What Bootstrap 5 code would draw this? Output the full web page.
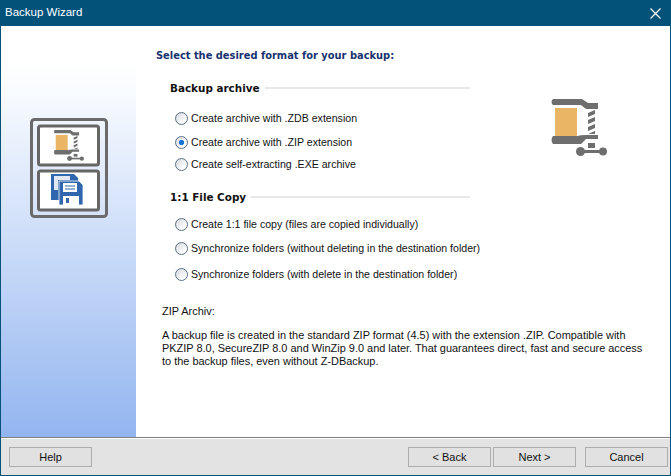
<!DOCTYPE html>
<html><head><meta charset="utf-8"><title>Backup Wizard</title>
<link href="https://cdn.jsdelivr.net/npm/bootstrap@5.3.0/dist/css/bootstrap.min.css" rel="stylesheet">
<style>
html,body{height:100%;margin:0;overflow:hidden}
body{font-family:"Liberation Sans",Arial,sans-serif;font-size:10.95px;color:#111;background:#fff}
.wiz{width:671px;height:476px;border:1px solid #02527a;border-top:0;display:flex;flex-direction:column}
.wiz-title{height:26px;background:#02527a;color:#fff;font-size:11.5px;margin:0 -1px;padding:0 0 0 5px}
.wiz-x{margin-right:10px}
.wiz-main{flex:1;min-height:0}
.wiz-side{width:135px;flex:none;padding:92px 0 0 29px;background:linear-gradient(#fff 0,#fff 38px,#f4f8fe 80px,#93b5f0 100%)}
.wiz-body{flex:1;padding:21px 0 0 20px;min-width:0}
.wiz-head{font-family:"DejaVu Sans",sans-serif;font-weight:700;font-size:9.9px;line-height:18px;color:#17336f}
.wiz-left{width:314px;padding:16px 0 0 14px;flex:none}
.grp{font-weight:700;font-family:"DejaVu Sans",sans-serif;font-size:10.4px;line-height:14px;color:#111;gap:5px}
.grp::after{content:"";flex:1;border-top:2px solid #e8e8e8}
.opt{margin:0 0 0 5px;padding:0;display:flex;align-items:center;gap:3px;height:13px;min-height:0;line-height:13px;white-space:nowrap;font-size:10.6px}
.opt .form-check-input{width:13px;height:13px;margin:0;flex:none;float:none;background-color:#fff;background-image:linear-gradient(135deg,#d4d8dc,#fdfdfd 75%);border:1px solid #5b7186}
.opt .form-check-input:checked{background-color:#fff;background-image:radial-gradient(circle,#1573d6 0,#1573d6 2.2px,transparent 3px),linear-gradient(135deg,#d4d8dc,#fdfdfd 75%);border-color:#5b7186}
.opt-a{margin-top:17px}.opt-b{margin-top:11px}.opt-c{margin-top:9px}.opt-d{margin-top:14px}.opt-e{margin-top:13px}
.grp-b{margin-top:19px}
.wiz-icon{margin:34px 0 0 80px;flex:none}
.desc{margin:24px 0 0 6px;width:490px;line-height:13px}
.desc p{margin:0}
.desc p+p{margin-top:11px}
.wiz-foot{height:38px;background:#e3e3e3;border-top:1px solid #808080;box-shadow:inset 0 1px 0 #fff;padding:9px 2px 0 8px}
.wiz-btn{width:83px;height:20px;padding:0;background:#e1e1e1;border:1px solid #adadad;border-radius:0;font-size:11px;line-height:18px;color:#111}
.gap-two{gap:2px}.gap-nine{gap:9px}
</style></head><body>
<svg width="0" height="0" class="position-absolute"><defs>
<symbol id="clamp" viewBox="0 0 57 57">
<rect x="5" y="9" width="22" height="28" fill="#ebb566"/>
<path d="M3 0H32L38 4H48V10H36L31 6H3Q0 3 3 0Z" fill="#6e6e6e"/>
<path d="M3 45H31L36 40H48V36H36Q30 36 28 37H3Q0 41 3 45Z" fill="#6e6e6e"/>
<path d="M38 11h7v24h-7z" fill="#fff"/>
<path d="M38 14l7-3v4l-7 3zM38 21l7-3v4l-7 3zM38 28l7-3v4l-7 3zM38 35l7-3v3z" fill="#6e6e6e"/>
<rect x="38" y="44" width="7" height="5" fill="#6e6e6e"/>
<rect x="28" y="51" width="27" height="3" fill="#6e6e6e"/>
<circle cx="30.500" cy="52.500" r="4.500" fill="#6e6e6e"/><circle cx="53" cy="52.500" r="4" fill="#6e6e6e"/>
</symbol>
</defs></svg>
<div class="wiz">
<div class="wiz-title d-flex align-items-center justify-content-between"><span>Backup Wizard</span>
<svg width="11" height="11" viewBox="0 0 11 11" class="wiz-x"><path d="M.5.500l10 10M10.500.500l-10 10" stroke="#fff" stroke-width="1.200"/></svg></div>
<div class="wiz-main d-flex">
<div class="wiz-side">
<svg width="80" height="103" viewBox="0 0 80 103">
<rect x="1.500" y="1.500" width="75" height="97" rx="3" fill="none" stroke="#6b6b6b" stroke-width="3"/>
<rect x="8.500" y="8" width="60" height="39" rx="2" fill="#fff" stroke="#666" stroke-width="3"/>
<rect x="8.500" y="53" width="60" height="39" rx="2" fill="#fff" stroke="#666" stroke-width="3"/>
<use href="#clamp" x="23" y="12" width="31" height="31"/>
<path d="M21 56h23l4 4v22H21z" fill="#2f66ad"/><path d="M24 58h16v4H24zM24 62h4v10h-4z" fill="#dfe8f4"/>
<path d="M29 63h20l4 4v20H29z" fill="#2f66ad" stroke="#fff" stroke-width=".8"/>
<path d="M33 65h14v9H33z" fill="#fff"/><path d="M35 68h10M35 71h10" stroke="#2f66ad"/>
<path d="M33 78h16v9H33z" fill="#fff"/><path d="M36 80h3v5h-3z" fill="#2f66ad"/>
</svg>
</div>
<div class="wiz-body">
<div class="wiz-head">Select the desired format for your backup:</div>
<div class="d-flex">
<div class="wiz-left">
<div class="grp d-flex align-items-center">Backup archive</div>
<div class="form-check opt opt-a"><input class="form-check-input" type="radio" name="f" id="a"><label for="a">Create archive with .ZDB extension</label></div>
<div class="form-check opt opt-b"><input class="form-check-input" type="radio" name="f" id="b" checked><label for="b">Create archive with .ZIP extension</label></div>
<div class="form-check opt opt-c"><input class="form-check-input" type="radio" name="f" id="c"><label for="c">Create self-extracting .EXE archive</label></div>
<div class="grp grp-b d-flex align-items-center">1:1 File Copy</div>
<div class="form-check opt opt-d"><input class="form-check-input" type="radio" name="f" id="d"><label for="d">Create 1:1 file copy (files are copied individually)</label></div>
<div class="form-check opt opt-b"><input class="form-check-input" type="radio" name="f" id="e"><label for="e">Synchronize folders (without deleting in the destination folder)</label></div>
<div class="form-check opt opt-e"><input class="form-check-input" type="radio" name="f" id="g"><label for="g">Synchronize folders (with delete in the destination folder)</label></div>
</div>
<svg class="wiz-icon" width="57" height="57"><use href="#clamp" width="57" height="57"/></svg>
</div>
<div class="desc"><p>ZIP Archiv:</p><p>A backup file is created in the standard ZIP format (4.5) with the extension .ZIP. Compatible with PKZIP 8.0, SecureZIP 8.0 and WinZip 9.0 and later. That guarantees direct, fast and secure access to the backup files, even without Z-DBackup.</p></div>
</div>
</div>
<div class="wiz-foot d-flex justify-content-between">
<button class="btn wiz-btn" type="button">Help</button>
<div class="d-flex gap-nine"><div class="d-flex gap-two"><button class="btn wiz-btn" type="button">&lt; Back</button><button class="btn wiz-btn" type="button">Next &gt;</button></div><button class="btn wiz-btn" type="button">Cancel</button></div>
</div>
</div>
</body></html>
